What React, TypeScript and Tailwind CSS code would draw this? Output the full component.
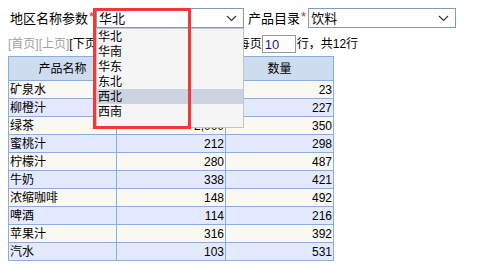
import React from "react";

const rows: [string, string, string][] = [
  ["矿泉水", "180", "23"],
  ["柳橙汁", "256", "227"],
  ["绿茶", "2,000", "350"],
  ["蜜桃汁", "212", "298"],
  ["柠檬汁", "280", "487"],
  ["牛奶", "338", "421"],
  ["浓缩咖啡", "148", "492"],
  ["啤酒", "114", "216"],
  ["苹果汁", "316", "392"],
  ["汽水", "103", "531"],
];

const regions = ["华北", "华南", "华东", "东北", "西北", "西南"];

function Chevron() {
  return (
    <svg width="11" height="7" viewBox="0 0 11 7" className="shrink-0">
      <path d="M1 1 L5.5 5.5 L10 1" fill="none" stroke="#333" strokeWidth="1.1" />
    </svg>
  );
}

function Select({ value, width }: { value: string; width: string }) {
  return (
    <div
      className={`${width} h-[20px] border border-[#7f9db9] bg-white flex items-center justify-between pl-[2px] pr-[6px]`}
    >
      <span className="text-[13px] leading-none text-black">{value}</span>
      <Chevron />
    </div>
  );
}

export default function App() {
  return (
    <div className="relative w-[483px] h-[276px] bg-white text-black text-[13px] font-['Liberation_Sans','Noto_Sans_CJK_SC',sans-serif] overflow-hidden">
      {/* filter row */}
      <div className="flex items-center pt-[8px] pl-[10px] h-[28px]">
        <span className="leading-none">地区名称参数</span>
        <span className="text-[#e02020] leading-none ml-[1px] mr-[2px] self-start mt-[2px]">*</span>
        <Select value="华北" width="w-[148px]" />
        <span className="leading-none ml-[4px]">产品目录</span>
        <span className="text-[#e02020] leading-none ml-[1px] mr-[2px] self-start mt-[2px]">*</span>
        <Select value="饮料" width="w-[148px]" />
      </div>

      {/* pager row (middle part sits under the open list) */}
      <div className="flex items-center pl-[8px] mt-[7px] h-[18px] whitespace-nowrap leading-none text-[12px]">
        <span className="text-[#a0a0a0]">[首页]</span>
        <span className="text-[#a0a0a0]">[上页]</span>
        <span>[下页</span>
        <span className="inline-block w-[141px]" />
        <span>每页</span>
        <div className="w-[34px] h-[18px] border border-[#999] bg-white flex items-center pl-[2px] text-[13px] text-[#1a1a7a]">
          10
        </div>
        <span className="ml-[1px]">行，共12行</span>
      </div>

      {/* table */}
      <table className="ml-[8px] mt-[3px] border-collapse table-fixed w-[325px] text-[12px]">
        <colgroup>
          <col className="w-[108px]" />
          <col className="w-[109px]" />
          <col className="w-[108px]" />
        </colgroup>
        <thead>
          <tr className="h-[24px] bg-[#cedcf0]">
            <th className="border border-[#86afe0] font-normal text-center leading-none">产品名称</th>
            <th className="border border-[#86afe0] font-normal text-center leading-none">销量</th>
            <th className="border border-[#86afe0] font-normal text-center leading-none">数量</th>
          </tr>
        </thead>
        <tbody>
          {rows.map(([name, a, b], i) => (
            <tr key={name} className={`h-[18px] ${i % 2 === 0 ? "bg-[#faf8f3]" : "bg-[#e3eaff]"}`}>
              <td className="border border-[#86afe0] px-[1px] leading-none">{name}</td>
              <td className="border border-[#86afe0] px-[1px] text-right leading-none">{a}</td>
              <td className="border border-[#86afe0] px-[1px] text-right leading-none">{b}</td>
            </tr>
          ))}
        </tbody>
      </table>

      {/* open dropdown list */}
      <div className="absolute left-[96px] top-[28px] w-[148px] h-[100px] bg-[#f5f5f5] border border-[#c4c4c4] text-[12px]">
        {regions.map((r) => (
          <div
            key={r}
            className={`h-[15px] flex items-center pl-[1px] leading-none ${r === "西北" ? "bg-[#cbd2e0]" : ""}`}
          >
            {r}
          </div>
        ))}
      </div>

      {/* red highlight frame */}
      <div className="absolute left-[93px] top-[8px] w-[98px] h-[121px] border-[3px] border-[#f03a3a]" />
    </div>
  );
}
